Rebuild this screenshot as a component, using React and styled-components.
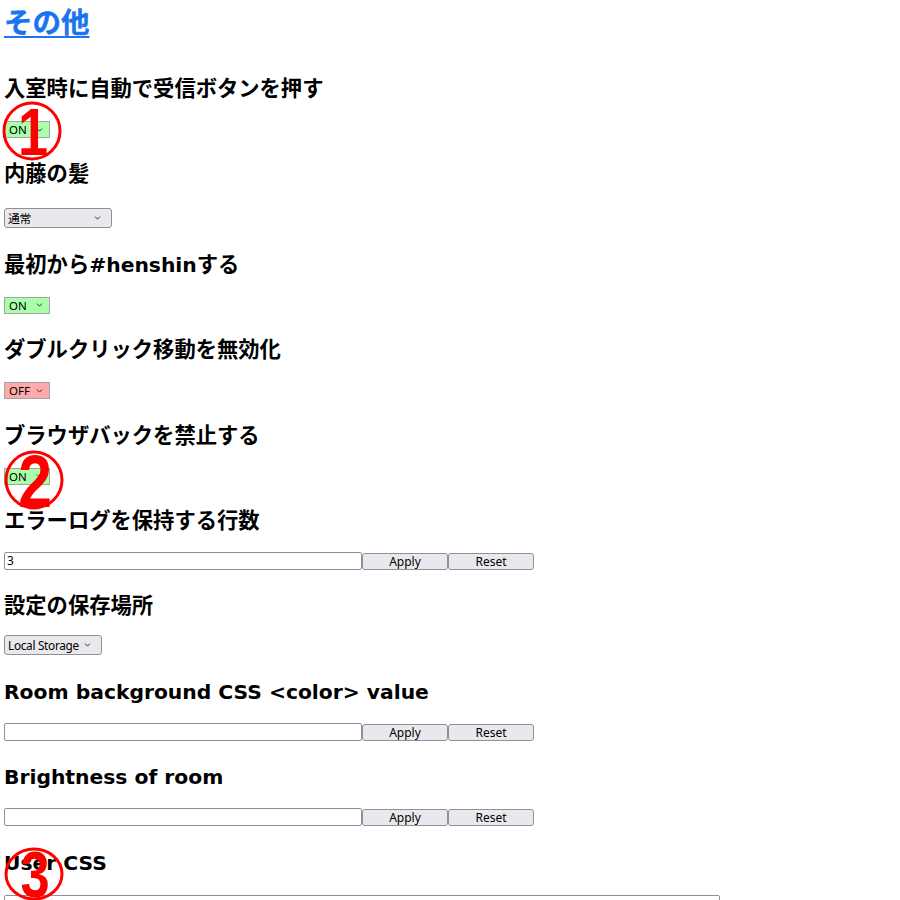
import React from "react";
import styled, {createGlobalStyle} from "styled-components";
import {ChevronDown} from "lucide-react";

const GlobalStyle = createGlobalStyle`
  html, body {
    margin: 0;
    padding: 0;
    background: #fff;
    overflow: hidden;
  }
  body {
    font-family: "Noto Sans", "Noto Sans CJK JP", sans-serif;
    color: #000;
  }
`;

const Page = styled.div`
  position: relative;
  padding: 0 4px;
  height: 900px;
  overflow: hidden;
`;

const Title = styled.h2`
  margin: 0 0 31px;
  font-size: 28.5px;
  line-height: 41px;
  font-weight: 700;
  font-family: "Noto Sans CJK JP", sans-serif;
  -webkit-text-stroke: 0.4px #1a73f0;
`;

const TitleLink = styled.a`
  color: #1a73f0;
  text-decoration: underline;
  text-decoration-thickness: 2px;
  text-underline-offset: 3px;
`;

const Heading = styled.h3`
  margin: 0;
  height: 30px;
  font-family: "Noto Sans CJK JP", sans-serif;
  font-size: 21.3px;
  line-height: 30px;
  font-weight: 700;
  white-space: nowrap;
`;

// latin runs in the headings are set in a Verdana-like face
const Latin = styled.span`
  font-family: "DejaVu Sans", sans-serif;
  font-size: 20.3px;
  line-height: 1;
  font-weight: 700;
`;

const Section = styled.section`
  display: flex;
  flex-direction: column;
  align-items: flex-start;
  gap: 19px;
  margin-bottom: 19.4px;
`;

const ControlRow = styled.div`
  display: flex;
  align-items: flex-end;
  height: ${p => p.$height || 17}px;
`;

const SelectBox = styled.div`
  position: relative;
  display: flex;
  width: ${p => p.$width}px;
`;

const Select = styled.select`
  appearance: none;
  box-sizing: border-box;
  width: 100%;
  height: ${p => (p.$flag ? "17px" : "20px")};
  margin: 0;
  padding: 0 0 0 ${p => (p.$flag ? "4px" : "3px")};
  font-family: "Noto Sans", "Noto Sans CJK JP", sans-serif;
  font-size: ${p => (p.$flag ? "11.5px" : "11.8px")};
  letter-spacing: ${p => (p.$flag ? "0" : "-0.3px")};
  color: #000;
  background-color: ${p => (p.$flag === "on" ? "#aaffaa" : p.$flag === "off" ? "#ffaaaa" : "#e9e9ed")};
  border: 1px solid ${p => (p.$flag ? "#a3a3a3" : "#8f8f9d")};
  border-radius: ${p => (p.$flag ? "0" : "3px")};
  outline: none;
`;

const Arrow = styled(ChevronDown)`
  position: absolute;
  right: ${p => p.$right}px;
  top: 50%;
  transform: translateY(-50%);
  width: 9px;
  height: 9px;
  color: #222;
  pointer-events: none;
`;

const TextInput = styled.input`
  box-sizing: border-box;
  width: 358px;
  height: 18px;
  margin: 0;
  padding: 0 2px;
  font-family: "Noto Sans", sans-serif;
  font-size: 12px;
  border: 1px solid #8f8f9d;
  border-radius: 2px;
  background: #fff;
`;

const Button = styled.button`
  box-sizing: border-box;
  width: 86px;
  height: 17px;
  margin: 0;
  padding: 0;
  font-family: "Noto Sans", sans-serif;
  font-size: 12px;
  line-height: 15px;
  color: #000;
  background: #e9e9ed;
  border: 1px solid #8f8f9d;
  border-radius: 3px;
`;

const TextArea = styled.textarea`
  box-sizing: border-box;
  width: 716px;
  height: 120px;
  margin: 0;
  border: 1px solid #8f8f9d;
  border-radius: 2px;
`;

const Marker = styled.svg`
  position: absolute;
  left: ${p => p.$x}px;
  top: ${p => p.$y}px;
  overflow: visible;
  pointer-events: none;
`;

const MarkerText = styled.text`
  font-family: "Liberation Sans", "Noto Sans", sans-serif;
  font-weight: 700;
  font-size: ${p => p.$size}px;
  fill: #ff0000;
`;

function NumberMark({x, y, n, rx = 28, ry = 28, size = 72}) {
  return (
    <Marker $x={x} $y={y} width="62" height="62" viewBox="0 0 62 62">
      <ellipse cx="31" cy="31" rx={rx} ry={ry} fill="none" stroke="#ff0000" strokeWidth="3" />
      <MarkerText
        $size={size}
        x="0"
        y="0"
        textAnchor="middle"
        transform={`translate(32 ${31 + size * 0.36}) scale(0.82 1)`}
      >
        {n}
      </MarkerText>
    </Marker>
  );
}

function FlagSelect({value}) {
  return (
    <SelectBox $width={46}>
      <Select $flag={value === "ON" ? "on" : "off"} defaultValue={value}>
        <option>ON</option>
        <option>OFF</option>
      </Select>
      <Arrow $right={6} strokeWidth={2.5} />
    </SelectBox>
  );
}

function PlainSelect({width, options}) {
  return (
    <SelectBox $width={width}>
      <Select defaultValue={options[0]}>
        {options.map(o => <option key={o}>{o}</option>)}
      </Select>
      <Arrow $right={10} strokeWidth={2.5} />
    </SelectBox>
  );
}

function InputRow({value}) {
  return (
    <ControlRow>
      <TextInput defaultValue={value} />
      <Button>Apply</Button>
      <Button>Reset</Button>
    </ControlRow>
  );
}

export default function App() {
  return (
    <>
      <GlobalStyle />
      <Page>
        <Title><TitleLink href="#other">その他</TitleLink></Title>

        <Section>
          <Heading>入室時に自動で受信ボタンを押す</Heading>
          <ControlRow><FlagSelect value="ON" /></ControlRow>
        </Section>

        <Section>
          <Heading>内藤の髪</Heading>
          <ControlRow $height={22}>
            <PlainSelect width={108} options={["通常", "ストレート"]} />
          </ControlRow>
        </Section>

        <Section>
          <Heading>最初から<Latin>#henshin</Latin>する</Heading>
          <ControlRow><FlagSelect value="ON" /></ControlRow>
        </Section>

        <Section>
          <Heading>ダブルクリック移動を無効化</Heading>
          <ControlRow><FlagSelect value="OFF" /></ControlRow>
        </Section>

        <Section>
          <Heading>ブラウザバックを禁止する</Heading>
          <ControlRow><FlagSelect value="ON" /></ControlRow>
        </Section>

        <Section>
          <Heading>エラーログを保持する行数</Heading>
          <InputRow value="3" />
        </Section>

        <Section>
          <Heading>設定の保存場所</Heading>
          <ControlRow>
            <PlainSelect width={98} options={["Local Storage", "Session Storage"]} />
          </ControlRow>
        </Section>

        <Section>
          <Heading><Latin>Room background CSS &lt;color&gt; value</Latin></Heading>
          <InputRow value="" />
        </Section>

        <Section>
          <Heading><Latin>Brightness of room</Latin></Heading>
          <InputRow value="" />
        </Section>

        <Section>
          <Heading><Latin>User CSS</Latin></Heading>
          <TextArea />
        </Section>

        <NumberMark x={1} y={100} n="1" size={66} />
        <NumberMark x={3} y={449} n="2" size={74} />
        <NumberMark x={3} y={843} n="3" ry={25} size={64} />
      </Page>
    </>
  );
}
